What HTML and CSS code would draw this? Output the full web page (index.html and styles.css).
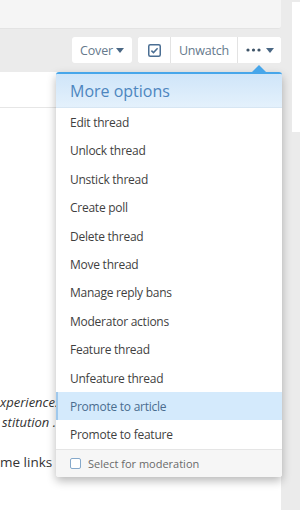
FILE: index.html
```html
<!DOCTYPE html>
<html lang="en">
  <head>
    <meta charset="UTF-8" />
    <meta name="viewport" content="width=device-width, initial-scale=1.0" />
    <title>Thread tools</title>
    <link rel="stylesheet" href="styles.css">
  </head>
  <body>
    <div class="page">
      <!-- Main column -->
      <div class="main">
        <div class="top-block"></div>

        <!-- Thread toolbar -->
        <div class="toolbar">
          <a class="btn btn-cover" href="#">Cover <span class="caret"></span></a>
          <div class="btn-group">
            <a class="btn btn-icon" href="#">
              <svg width="13" height="13" viewBox="0 0 13 13">
                <rect x="0.75" y="0.75" width="11.5" height="11.5" rx="1.5" fill="none" stroke="#4a6e93" stroke-width="1.5"/>
                <path d="M3.4 6.6 L5.5 8.6 L9.6 4.2" fill="none" stroke="#4a6e93" stroke-width="1.5"/>
              </svg>
            </a>
            <a class="btn btn-watch" href="#">Unwatch</a>
            <a class="btn btn-more" href="#">
              <svg width="15" height="4" viewBox="0 0 15 4">
                <circle cx="2" cy="2" r="1.6" fill="#3f5468"/>
                <circle cx="7.5" cy="2" r="1.6" fill="#3f5468"/>
                <circle cx="13" cy="2" r="1.6" fill="#3f5468"/>
              </svg>
              <span class="caret"></span>
            </a>
          </div>
        </div>

        <!-- Post content behind the menu -->
        <div class="content">
          <div class="content-head"></div>
          <div class="post-text">
            <p class="quote">xperience.</p>
            <p class="quote quote-second">stitution .</p>
            <p class="plain">me links</p>
          </div>
        </div>

        <!-- More options menu -->
        <div class="menu">
          <span class="menu-arrow"></span>
          <div class="menu-body">
            <h3 class="menu-header">More options</h3>
            <ul class="menu-list">
              <li><a href="#">Edit thread</a></li>
              <li><a href="#">Unlock thread</a></li>
              <li><a href="#">Unstick thread</a></li>
              <li><a href="#">Create poll</a></li>
              <li><a href="#">Delete thread</a></li>
              <li><a href="#">Move thread</a></li>
              <li><a href="#">Manage reply bans</a></li>
              <li><a href="#">Moderator actions</a></li>
              <li><a href="#">Feature thread</a></li>
              <li><a href="#">Unfeature thread</a></li>
              <li class="active"><a href="#">Promote to article</a></li>
              <li><a href="#">Promote to feature</a></li>
            </ul>
            <label class="menu-footer">
              <span class="check"></span>
              Select for moderation
            </label>
          </div>
        </div>
      </div>

      <!-- Sidebar -->
      <div class="side">
        <div class="side-block"></div>
      </div>
    </div>
  </body>
</html>
```

FILE: styles.css
```css
/* General Styling */
* {
  box-sizing: border-box;
  margin: 0;
  padding: 0;
}

body {
  font-family: "Open Sans", "Noto Sans", sans-serif;
  background-color: #ebebeb;
  color: #333;
  overflow: hidden;
}

a {
  text-decoration: none;
  color: inherit;
}

.page {
  display: flex;
  height: 510px;
}

/* Main column */
.main {
  position: relative;
  width: 281px;
  display: flex;
  flex-direction: column;
}

.top-block {
  height: 29px;
  background: #f5f5f5;
  border-bottom: 1px solid #e3e3e3;
  border-bottom-right-radius: 3px;
}

.toolbar {
  height: 43px;
  display: flex;
  justify-content: flex-end;
  align-items: flex-start;
  gap: 6px;
  padding-top: 8px;
}

.btn {
  display: flex;
  align-items: center;
  justify-content: center;
  height: 26px;
  background: #fff;
  border-radius: 3px;
  font-size: 12.5px;
  letter-spacing: -0.2px;
  color: #66798c;
}

.btn-cover {
  width: 60px;
}

.btn-group {
  display: flex;
  background: #fff;
  border-radius: 3px;
}

.btn-group .btn {
  border-radius: 0;
  border-left: 1px solid #e3e3e3;
}

.btn-group .btn:first-child {
  border-left: none;
  border-radius: 3px 0 0 3px;
}

.btn-group .btn:last-child {
  border-radius: 0 3px 3px 0;
}

.btn-icon {
  width: 32px;
}

.btn-watch {
  width: 67px;
}

.btn-more {
  width: 44px;
  gap: 2px;
}

.caret {
  display: inline-block;
  width: 0;
  height: 0;
  margin-left: 3px;
  border-left: 4px solid transparent;
  border-right: 4px solid transparent;
  border-top: 5px solid #4a6784;
}

/* Content area */
.content {
  flex: 1;
  background: #fff;
  overflow: hidden;
}

.content-head {
  height: 36px;
  border-bottom: 1px solid #e6e6e6;
}

.post-text {
  padding-top: 284px;
  white-space: nowrap;
}

.quote {
  font-style: italic;
  font-size: 13px;
  line-height: 20px;
  color: #333;
}

.quote-second {
  padding-left: 2px;
}

.plain {
  margin-top: 20px;
  font-size: 13.5px;
  line-height: 20px;
  color: #333;
}

/* More options menu */
.menu {
  position: absolute;
  top: 65px;
  left: 56px;
  width: 226px;
}

.menu-arrow {
  position: absolute;
  top: 0;
  left: 195px;
  width: 0;
  height: 0;
  border-left: 8px solid transparent;
  border-right: 8px solid transparent;
  border-bottom: 8px solid #47a6ea;
}

.menu-body {
  margin-top: 7px;
  background: #fff;
  border-top: 2px solid #47a6ea;
  border-radius: 3px;
  box-shadow: 0 4px 10px rgba(0, 0, 0, 0.28);
  overflow: hidden;
}

.menu-header {
  height: 34px;
  padding: 1px 14px 0;
  display: flex;
  align-items: center;
  font-size: 16px;
  font-weight: normal;
  color: #4d86bf;
  background: linear-gradient(#cfe5f9, #e4f1fc);
  border-bottom: 1px solid #d7e6f3;
}

.menu-list {
  list-style: none;
}

.menu-list li a {
  display: block;
  padding: 6px 14px 4px;
  line-height: 18.4px;
  font-size: 12px;
  letter-spacing: -0.25px;
  color: #3f3f3f;
}

.menu-list li.active a {
  background: #d4eafc;
  border-left: 2px solid #9fc8ec;
  padding-left: 12px;
  color: #4a6d8f;
}

.menu-footer {
  display: flex;
  align-items: center;
  gap: 7px;
  height: 28px;
  padding: 0 14px;
  background: #f6f6f6;
  border-top: 1px solid #e5e5e5;
  font-size: 11px;
  color: #6a6a6a;
}

.check {
  width: 11px;
  height: 11px;
  background: #fff;
  border: 1px solid #86a9cb;
  border-radius: 2px;
}

/* Sidebar */
.side {
  flex: 1;
  padding-left: 11px;
  padding-top: 2px;
}

.side-block {
  height: 130px;
  background: #fff;
}
```
